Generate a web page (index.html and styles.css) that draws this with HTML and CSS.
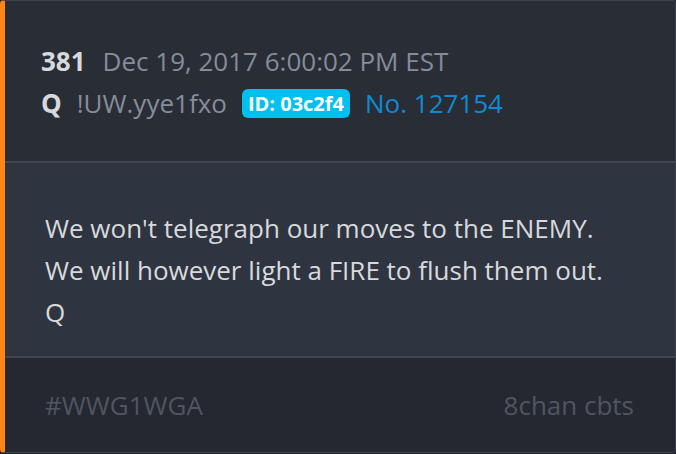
FILE: index.html
```html
<!DOCTYPE html>
<html lang="en">
<head>
	<meta charset="UTF-8">
	<title>Q Post 381</title>
	<link rel="stylesheet" href="styles.css">
</head>
<body>
	<article class="post">
		<header class="post-head">
			<div class="meta-row">
				<span class="post-num">381</span>
				<span class="post-date">Dec 19, 2017 6:00:02 PM EST</span>
			</div>
			<div class="meta-row">
				<span class="post-name">Q</span>
				<span class="post-trip">!UW.yye1fxo</span>
				<span class="post-id">ID: 03c2f4</span>
				<span class="post-no">No. 127154</span>
			</div>
		</header>
		<section class="post-body">
			<p>We won't telegraph our moves to the ENEMY.</p>
			<p>We will however light a FIRE to flush them out.</p>
			<p>Q</p>
		</section>
		<footer class="post-foot">
			<span>#WWG1WGA</span>
			<span>8chan cbts</span>
		</footer>
	</article>
</body>
</html>
```

FILE: styles.css
```css
* {
	box-sizing: border-box;
}
html, body {
	margin: 0;
	background: #1f2229;
}
body {
	font-family: "Open Sans", "Noto Sans", sans-serif;
}
.post {
	display: flex;
	flex-direction: column;
	width: 676px;
	height: 453px;
	border: 1px solid #3d424d;
	border-left: 5px solid #ff8516;
	border-radius: 4px;
	overflow: hidden;
	background: #292d36;
}
.post-head {
	display: flex;
	flex-direction: column;
	justify-content: center;
	height: 162px;
	padding: 2px 36px 0;
	border-bottom: 2px solid #404652;
	background: #292d36;
}
.meta-row {
	display: flex;
	align-items: center;
	gap: 15px;
	height: 42px;
	font-size: 26px;
	color: #868c99;
}
.post-num, .post-name {
	font-weight: 700;
	color: #d8d9dc;
}
.post-num {
	margin-right: 2px;
}
.post-id {
	padding: 0 6px;
	border-radius: 6px;
	background: #00c0f0;
	color: #fff;
	font-size: 20px;
	font-weight: 700;
	line-height: 29px;
}
.post-no {
	color: #0f8ad4;
}
.post-body {
	height: 195px;
	padding: 44px 40px 0;
	background: #2f3540;
	border-bottom: 2px solid #404652;
	color: #d8d9dc;
	font-size: 26px;
}
.post-body p {
	margin: 0;
	line-height: 42px;
}
.post-foot {
	flex: 1;
	display: flex;
	justify-content: space-between;
	align-items: center;
	padding: 0 41px 0 40px;
	background: #252830;
	color: #4f5562;
	font-size: 26px;
}
```
